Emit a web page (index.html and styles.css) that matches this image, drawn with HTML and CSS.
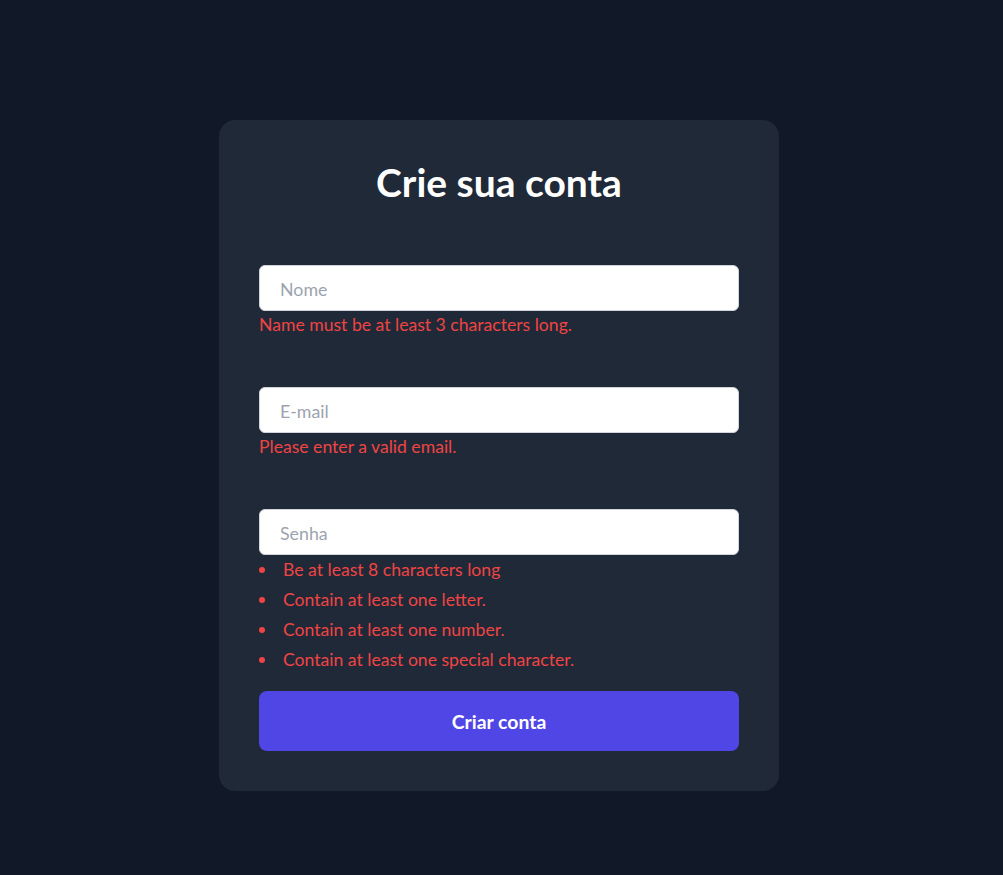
FILE: index.html
```html
<!DOCTYPE html>
<html lang="pt">
<head>
<meta charset="utf-8">
<title>Crie sua conta</title>
<link rel="stylesheet" href="styles.css">
</head>
<body>
<main class="page">
  <section class="card">
    <h1 class="title">Crie sua conta</h1>
    <form class="form">
      <div class="field">
        <input class="input" type="text" placeholder="Nome">
        <p class="error">Name must be at least 3 characters long.</p>
      </div>
      <div class="field">
        <input class="input" type="email" placeholder="E-mail">
        <p class="error">Please enter a valid email.</p>
      </div>
      <div class="field field-last">
        <input class="input" type="password" placeholder="Senha">
        <ul class="rules">
          <li>Be at least 8 characters long</li>
          <li>Contain at least one letter.</li>
          <li>Contain at least one number.</li>
          <li>Contain at least one special character.</li>
        </ul>
      </div>
      <button class="submit" type="button">Criar conta</button>
    </form>
  </section>
</main>
</body>
</html>
```
FILE: styles.css
```css
* { box-sizing: border-box; }
html, body { margin: 0; padding: 0; }
body {
  background: #111827;
  font-family: Lato, "Noto Sans", sans-serif;
  color: #fff;
  min-height: 875px;
}
.page {
  display: flex;
  justify-content: center;
  padding: 120px 5px 0 0;
}
.card {
  width: 560px;
  background: #1f2937;
  border-radius: 16px;
  padding: 40px;
}
.title {
  margin: 0;
  padding-top: 4px;
  font-size: 39px;
  line-height: 36px;
  font-weight: 700;
  text-align: center;
  color: #fff;
}
.form {
  margin-top: 65px;
  display: flex;
  flex-direction: column;
}
.field { margin-bottom: 52px; }
.field-last { margin-bottom: 0; }
.input {
  display: block;
  width: 100%;
  height: 46px;
  padding: 1px 20px 0;
  background: #fff;
  border: 1px solid #d1d5db;
  border-radius: 6px;
  font-family: inherit;
  font-size: 17.8px;
  color: #111827;
  outline: none;
}
.input::placeholder { color: #9ca3af; }
.error {
  margin: 0;
  padding-top: 4px;
  font-size: 17.6px;
  line-height: 20px;
  color: #ef4444;
}
.rules {
  margin: 0;
  padding: 0;
  list-style: none;
}
.rules li {
  display: flex;
  align-items: center;
  font-size: 17.6px;
  line-height: 30px;
  color: #ef4444;
}
.rules li::before {
  content: "";
  width: 6px;
  height: 6px;
  border-radius: 50%;
  background: #ef4444;
  margin-right: 18px;
  flex: none;
}
.submit {
  margin-top: 16px;
  height: 60px;
  border: none;
  border-radius: 8px;
  background: #4f46e5;
  color: #fff;
  font-family: inherit;
  font-size: 19.4px;
  font-weight: 700;
  cursor: pointer;
}
```
